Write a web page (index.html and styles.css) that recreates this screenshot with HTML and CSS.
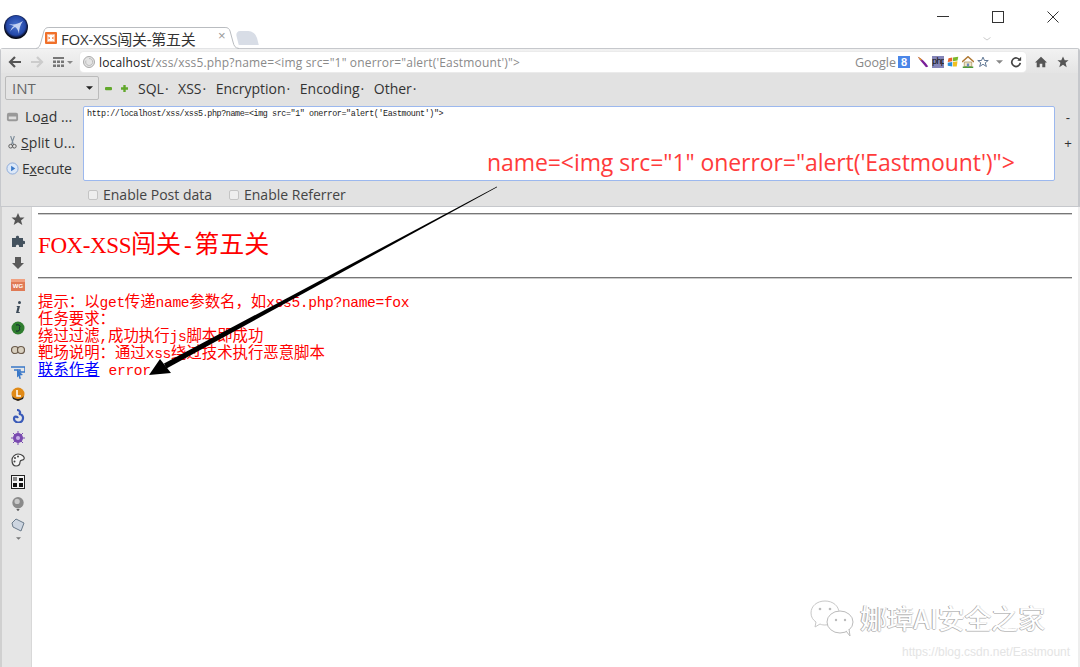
FILE: index.html
```html
<!DOCTYPE html>
<html lang="zh">
<head>
<meta charset="utf-8">
<title>FOX-XSS闯关-第五关</title>
<link rel="stylesheet" href="styles.css">
</head>
<body>
<div class="window">
  <header class="titlebar">
    <svg class="logo" viewBox="0 0 24 24"><defs><radialGradient id="lg" cx="50%" cy="45%" r="52%"><stop offset="0" stop-color="#4a74d0"/><stop offset=".75" stop-color="#2448a8"/><stop offset=".9" stop-color="#101c48"/><stop offset="1" stop-color="#050810"/></radialGradient></defs><circle cx="12" cy="12" r="12" fill="url(#lg)"/><path d="M5 9C10 10 14 9 19 6C16 10 15 14 15 19C14 15 13 13 11 12C9 13 7 15 6 17C7 14 8 12 10 11C8 10 6 10 5 9Z" fill="#c4d2f2"/></svg>
    <div class="tab">
      <svg class="tab-shape" viewBox="0 0 204 22" preserveAspectRatio="none"><path d="M0 21.5C3 21 4 19 5 15L8 4C9 1.500 10 .5 13 .5H190C193 .5 194 1.500 195 4L198 15C199 19 200 21 204 21.500" fill="#fff" stroke="#b9bcc0"/></svg>
      <svg class="favicon" viewBox="0 0 12 12"><rect width="12" height="12" rx="1" fill="#f0702a"/><path d="M2.500 2.500L5 5M9.500 2.500L7 5M2.500 9.500L5 7M9.500 9.500L7 7M3 3H5.500V9H3ZM6.500 3H9V9H6.500Z" stroke="#fff" stroke-width="1.100" fill="none"/></svg>
      <span class="tab-title">FOX-XSS闯关-第五关</span>
      <span class="tab-close">×</span>
    </div>
    <div class="newtab"></div>
    <svg class="chev" viewBox="0 0 8 4"><path d="M.5 .5L4 3L7.500 .5" stroke="#ccc" fill="none"/></svg>
    <div class="winctl">
      <svg class="ctl" viewBox="0 0 12 12"><path d="M0 5.500H12" stroke="#333"/></svg>
      <svg class="ctl" viewBox="0 0 12 12"><rect x=".5" y=".5" width="11" height="11" fill="none" stroke="#333"/></svg>
      <svg class="ctl" viewBox="0 0 12 12"><path d="M.5 .5L11.500 11.500M11.500 .5L.5 11.500" stroke="#333"/></svg>
    </div>
  </header>

  <section class="chrome">
    <div class="navrow">
      <svg class="nav" viewBox="0 0 14 14"><path d="M7 2L2 7L7 12M2 7H13" stroke="#555" stroke-width="2.200" fill="none"/></svg>
      <svg class="nav" viewBox="0 0 14 14"><path d="M7 2L12 7L7 12M12 7H1" stroke="#ccc" stroke-width="2.200" fill="none"/></svg>
      <svg class="nav grid" viewBox="0 0 20 12"><path d="M0 1H11V3H0ZM0 4.500H3V7H0ZM4 4.500H7V7H4ZM8 4.500H11V7H8ZM0 8.500H3V11H0ZM4 8.500H7V11H4ZM8 8.500H11V11H8Z" fill="#777"/><path d="M14 5H20L17 8Z" fill="#888"/></svg>
      <div class="urlbar">
        <svg class="globe" viewBox="0 0 12 12"><circle cx="6" cy="6" r="5.500" fill="#e4e4e4" stroke="#aaa"/><path d="M6 2.500A3.500 3.500 0 1 1 3 4.500" stroke="#bbb" fill="none"/></svg>
        <span class="url"><span class="host">localhost</span>/xss/xss5.php?name=&lt;img src="1" onerror="alert('Eastmount')"&gt;</span>
        <span class="google">Google</span>
        <span class="gbadge">8</span>
        <svg class="addon feather" viewBox="0 0 16 16"><path d="M1 1C6 3 11 8 15 14L12 15C8 10 4 6 1 1Z" fill="#7a1f9a"/><path d="M1 1C4 2 6 4 7 6L4 5Z" fill="#e8a020"/></svg>
        <span class="phpbadge">php</span>
        <svg class="addon" viewBox="0 0 16 16"><path d="M2 3L7 2V7L1 8Z" fill="#e8622a"/><path d="M8 2L15 1L14 6L8 7Z" fill="#7cb82a"/><path d="M1 9L7 8V14L1 13Z" fill="#2a8cd8"/><path d="M8 8L14 7L13 14L8 14Z" fill="#f0c020"/></svg>
        <svg class="addon" viewBox="0 0 16 16"><path d="M0 8L8 1L16 8" stroke="#b07a35" stroke-width="2" fill="none"/><path d="M3 8H13V14H3Z" fill="#f0e6c8" stroke="#a89060"/><path d="M1 15H15" stroke="#4c9a3a" stroke-width="2"/><path d="M6.500 10H9.500V14H6.500Z" fill="#6a8ac0"/></svg>
        <svg class="addon" viewBox="0 0 16 16"><path d="M8 1.500L10 6H15L11 9L12.500 14L8 11L3.500 14L5 9L1 6H6Z" fill="#fff" stroke="#5a7290" stroke-width="1.300"/></svg>
        <svg class="caret" viewBox="0 0 8 4"><path d="M0 0H8L4 4Z" fill="#888"/></svg>
        <svg class="reload" viewBox="0 0 14 14"><path d="M11.500 5A5 5 0 1 0 12 8" stroke="#444" stroke-width="2" fill="none"/><path d="M8.500 5.500H13V1Z" fill="#444"/></svg>
      </div>
      <svg class="tool" viewBox="0 0 14 14"><path d="M7 1L14 7.500H12V13H8.500V9H5.500V13H2V7.500H0Z" fill="#555"/></svg>
      <svg class="tool" viewBox="0 0 14 14"><path d="M7 .5L9 5H13.500L10 8L11.300 13L7 10.200L2.700 13L4 8L.5 5H5Z" fill="#555"/></svg>
    </div>

    <div class="hackbar-menu">
      <div class="select"><span>INT</span><svg class="sel-caret" viewBox="0 0 8 4"><path d="M0 0H8L4 4Z" fill="#222"/></svg></div>
      <svg class="mini minus" viewBox="0 0 7 7"><rect y="2" width="7" height="3.200" rx="1" fill="#62a82c"/></svg>
      <svg class="mini" viewBox="0 0 7 7"><path d="M2.300 0H4.700V2.300H7V4.700H4.700V7H2.300V4.700H0V2.300H2.300Z" fill="#62a82c"/></svg>
      <span class="menu-item first">SQL<i>·</i></span>
      <span class="menu-item">XSS<i>·</i></span>
      <span class="menu-item">Encryption<i>·</i></span>
      <span class="menu-item">Encoding<i>·</i></span>
      <span class="menu-item">Other<i>·</i></span>
    </div>

    <div class="hackbar-main">
      <div class="hb-actions">
        <div class="hb-btn"><svg class="hb-ico" viewBox="0 0 14 14"><rect x="1" y="3" width="12" height="9" rx="2" fill="#999"/><rect x="3" y="7" width="8" height="3" fill="#ddd"/></svg><span class="lbl-load">Lo<u>a</u>d ...</span></div>
        <div class="hb-btn"><svg class="hb-ico" viewBox="0 0 14 14"><path d="M5 0L8 9M9 0L6 9" stroke="#7a8a98" stroke-width="1.200"/><circle cx="5" cy="11" r="2" fill="none" stroke="#555"/><circle cx="9" cy="11" r="2" fill="none" stroke="#555"/></svg><span class="lbl-split"><u>S</u>plit U...</span></div>
        <div class="hb-btn"><svg class="hb-ico" viewBox="0 0 14 14"><circle cx="7" cy="7" r="6" fill="#dce8f8" stroke="#88a8d8"/><path d="M5.500 4L10 7L5.500 10Z" fill="#3a78c8"/></svg><span class="lbl-exec">E<u>x</u>ecute</span></div>
      </div>
      <div class="urlbox">http://localhost/xss/xss5.php?name=&lt;img src="1" onerror="alert('Eastmount')"&gt;</div>
      <div class="hb-side"><span>-</span><span>+</span></div>
    </div>

    <div class="hb-options">
      <label class="opt"><span class="check"></span>Enable Post data</label>
      <label class="opt"><span class="check"></span>Enable Referrer</label>
    </div>
  </section>

  <div class="body-row">
    <aside class="sidebar">
      <svg class="si" viewBox="0 0 14 14"><path d="M7 1L9 5.500H13.500L10 8.500L11.300 13L7 10.300L2.700 13L4 8.500L.5 5.500H5Z" fill="#555"/></svg>
      <svg class="si" viewBox="0 0 14 14"><path d="M1 4H5C4 1 9 1 8 4H12V7C15 6 15 11 12 10V13H8C9 10 4 10 5 13H1Z" fill="#44525e"/></svg>
      <svg class="si" viewBox="0 0 14 14"><path d="M4 1H10V7H13L7 13L1 7H4Z" fill="#5a5a5a"/></svg>
      <svg class="si" viewBox="0 0 14 14"><rect y="1" width="14" height="12" fill="#e07a55"/><rect y="1" width="14" height="3" fill="#f0a080"/><text x="7" y="10" class="si-text">WG</text></svg>
      <svg class="si" viewBox="0 0 14 14"><circle cx="8.500" cy="2.500" r="1.500" fill="#3c4a58"/><path d="M6 6H9L7.500 12H9L8.500 13H5L6.500 7H5.500Z" fill="#3c4a58"/></svg>
      <svg class="si" viewBox="0 0 14 14"><circle cx="7" cy="7" r="6.500" fill="#2f7d2f"/><path d="M5 4C9 3 10 6 8 7C10 8 8 11 5 10" stroke="#123" fill="none"/></svg>
      <svg class="si" viewBox="0 0 14 14"><circle cx="4" cy="7" r="3.500" fill="#d8d0c0" stroke="#6a5a4a" stroke-width="1.200"/><circle cx="10" cy="7" r="3.500" fill="#d8d0c0" stroke="#6a5a4a" stroke-width="1.200"/></svg>
      <svg class="si" viewBox="0 0 14 14"><path d="M0 2H14V7H9V5H3" fill="none" stroke="#3a78c8" stroke-width="1.500"/><path d="M6 4L12 10L9 10.500L10 13.500L8.500 14L7.500 11L6 12.500Z" fill="#3a78c8"/></svg>
      <svg class="si" viewBox="0 0 14 14"><circle cx="7" cy="7" r="6.500" fill="#e08a18"/><path d="M1 9C4 13 10 13 13 9L12 12L7 14L2 12Z" fill="#222"/><path d="M6 3V9H10" stroke="#fff" stroke-width="1.500" fill="none"/></svg>
      <svg class="si" viewBox="0 0 14 14"><path d="M6 1C9 1 10 4 8 5C12 5 13 9 11 12C8 15 3 13 3 10C3 7 6 7 7 9" fill="none" stroke="#3a5ab8" stroke-width="2.200"/></svg>
      <svg class="si" viewBox="0 0 14 14"><circle cx="7" cy="7" r="5" fill="#7a4ab0"/><path d="M7 0V14M0 7H14M2 2L12 12M12 2L2 12" stroke="#7a4ab0"/><circle cx="7" cy="7" r="2" fill="#c8b0e8"/></svg>
      <svg class="si" viewBox="0 0 14 14"><path d="M7 1C11 1 14 4 13 6C12 8 9 6 9 9C9 12 7 13 5 13C2 13 1 10 1 7C1 4 4 1 7 1Z" fill="#f4f4f4" stroke="#444" stroke-width="1.200"/><circle cx="4" cy="5" r="1" fill="#444"/><circle cx="7" cy="3.500" r="1" fill="#444"/><circle cx="3.500" cy="8.500" r="1" fill="#444"/></svg>
      <svg class="si" viewBox="0 0 14 14"><rect x=".5" y=".5" width="13" height="13" fill="#f4f4f4" stroke="#222"/><rect x="2" y="2" width="4" height="4" fill="#888"/><rect x="8" y="3" width="4" height="3" fill="#111"/><rect x="2" y="8" width="4" height="4" fill="#111"/><rect x="8" y="8" width="4" height="4" fill="#111"/></svg>
      <svg class="si" viewBox="0 0 14 16"><circle cx="7" cy="6.500" r="6.500" fill="#8a8a8a"/><circle cx="6" cy="5" r="3" fill="#c8c8c8"/><path d="M5 14H9L7 16Z" fill="#333"/></svg>
      <svg class="si" viewBox="0 0 14 14"><path d="M5 1L13 5L10 13L2 9L1 5Z" fill="#cdd5e0" stroke="#6a7a8a"/></svg>
      <svg class="si-more" viewBox="0 0 6 3"><path d="M0 0H6L3 3Z" fill="#777"/></svg>
    </aside>

    <main class="content">
      <hr class="rule">
      <h1 class="head"><span class="lat">FOX-XSS</span>闯关<span class="lat dash">-</span>第五关</h1>
      <hr class="rule second">
      <div class="lines">
        <p>提示：以<span class="lat">get</span>传递<span class="lat">name</span>参数名，如<span class="lat">xss5.php?name=fox</span></p>
        <p>任务要求：</p>
        <p>绕过过滤<span class="lat">,</span>成功执行<span class="lat">js</span>脚本即成功</p>
        <p>靶场说明：通过<span class="lat">xss</span>绕过技术执行恶意脚本</p>
        <p><a class="link" href="#">联系作者</a><span class="lat err">error</span></p>
      </div>
    </main>
  </div>
</div>

<div class="note">name=&lt;img src="1" onerror="alert('Eastmount')"&gt;</div>
<svg class="arrow" viewBox="0 0 1080 667"><path d="M497 186.500L164 363.500L166.500 368.500L497 187.300Z" fill="#000"/><path d="M149 375L160 359L171 373Z" fill="#000"/></svg>

<div class="mark">
  <svg class="mark-ico" viewBox="0 0 44 38"><path d="M15 1C7 1 1 6 1 13C1 17 3 20 6 22L5 27L10 24C12 25 14 25 15 25C24 25 29 19 29 13C29 6 23 1 15 1Z" fill="#fff" stroke="#c8c8c8"/><ellipse cx="30" cy="22" rx="13" ry="11" fill="#fff" stroke="#bbb"/><path d="M36 31L40 36L39 29" fill="#fff" stroke="#bbb"/><circle cx="10" cy="9" r="1.300" fill="#bbb"/><circle cx="20" cy="9" r="1.300" fill="#bbb"/><circle cx="26" cy="20" r="1.200" fill="#bbb"/><circle cx="35" cy="20" r="1.200" fill="#bbb"/></svg>
  <span class="mark-text">娜璋AI安全之家</span>
</div>
<div class="csdn">https://blog.csdn.net/Eastmount</div>
</body>
</html>
```

FILE: styles.css
```css
* { box-sizing: border-box; }
html, body { margin: 0; height: 667px; overflow: hidden; background: #fff; }
body { position: relative; font-family: "Liberation Sans", "Noto Sans CJK SC", sans-serif; color: #333; }
.window { height: 667px; width: 1080px; display: flex; flex-direction: column; }

.titlebar { height: 48px; flex: none; display: flex; align-items: flex-end; position: relative; }
.logo { width: 24px; height: 24px; margin: 0 8px 9px 4px; align-self: flex-end; }
.tab { width: 203px; height: 21px; position: relative; display: flex; align-items: center; padding: 1px 0 0 9px; }
.tab-shape { position: absolute; left: 0; top: 0; width: 100%; height: 22px; }
.favicon { width: 12px; height: 12px; position: relative; margin-right: 4px; }
.tab-title { position: relative; font: 15px "Open Sans", "Noto Sans CJK SC", sans-serif; color: #333; white-space: nowrap; letter-spacing: -.25px; }
.tab-close { position: absolute; left: 182px; top: 1px; font-size: 13px; color: #999; }
.newtab { width: 20px; height: 14px; margin: 0 0 3px -2px; background: #d8dde6; border-radius: 5px 7px 0 0; transform: skewX(14deg); }
.chev { width: 8px; height: 4px; margin: 0 0 7px 726px; flex: none; }
.winctl { position: absolute; right: 0; top: 0; display: flex; gap: 43px; padding: 11px 21px 0 0; }
.ctl { width: 12px; height: 12px; }

.chrome { height: 159px; flex: none; background: #e2e2e2; border: 1px solid #c6c8cc; border-radius: 3px 3px 0 0; border-right-width: 2px; display: flex; flex-direction: column; }
.navrow { height: 25px; display: flex; align-items: center; padding: 2px 0 0 7px; background: linear-gradient(#f2f2f2, #e4e4e4); }
.nav { width: 14px; height: 14px; margin-right: 8px; }
.nav.grid { width: 20px; height: 12px; margin: 0 7px 0 1px; }
.urlbar { width: 946px; height: 20px; flex: none; background: #fff; border-radius: 4px; box-shadow: 0 0 0 1px #ebebeb; display: flex; align-items: center; padding: 0 4px 0 3px; }
.globe { width: 12px; height: 12px; margin-right: 4px; flex: none; }
.url { font: 12px "Open Sans", sans-serif; color: #8a8a8a; white-space: nowrap; letter-spacing: .17px; }
.host { color: #222; }
.google { margin-left: auto; font: 12.500px "Open Sans", sans-serif; color: #888; }
.gbadge { width: 12px; height: 12px; margin: 0 7px 0 2px; background: #4a86e8; color: #fff; font: bold 11px/12px "Liberation Sans", sans-serif; text-align: center; }
.addon { width: 12px; height: 12px; margin-right: 3px; flex: none; }
.phpbadge { width: 12px; height: 12px; margin-right: 3px; background: #8485b8; color: #111; font: 9px/11px "Liberation Sans", sans-serif; letter-spacing: -.6px; overflow: hidden; text-align: center; }
.caret { width: 7px; height: 4px; margin: 0 7px 0 4px; }
.reload { width: 12px; height: 12px; }
.tool { width: 12px; height: 12px; margin-left: 9px; }
.tool + .tool { margin-left: 10px; }

.hackbar-menu { height: 30px; display: flex; align-items: center; padding: 2px 0 0 4px; font: 14px "Open Sans", sans-serif; color: #333; }
.select { width: 94px; height: 24px; border: 1px solid #bbb; border-radius: 2px; background: #e4e4e4; display: flex; align-items: center; justify-content: space-between; padding: 0 5px 0 6px; color: #666; font-size: 15px; }
.sel-caret { width: 7px; height: 4px; }
.mini { width: 7px; height: 7px; margin-left: 9px; }
.minus { margin-left: 6px; }
.menu-item { margin-left: 9.500px; white-space: nowrap; }
.menu-item i { font-style: normal; margin-left: 1px; }
.menu-item.first { margin-left: 10px; }

.hackbar-main { display: flex; height: 75px; margin-top: 4px; }
.hb-actions { width: 82px; flex: none; padding: 0 0 0 5px; display: flex; flex-direction: column; margin-top: -2px; }
.hb-btn { height: 26px; flex: none; display: flex; align-items: center; gap: 4px; font: 14px "Open Sans", sans-serif; white-space: nowrap; letter-spacing: -.1px; }
.lbl-load { margin-left: 2px; letter-spacing: .05px; }
.lbl-split { margin-left: -2px; letter-spacing: .1px; }
.lbl-exec { margin-left: -1px; letter-spacing: -.2px; }
.hb-ico { width: 13px; height: 13px; flex: none; }
.urlbox { width: 972px; flex: none; height: 75px; background: #fff; border: 1px solid #9cb8ee; border-radius: 2px; padding: 1px 3px; font: 8.400px/12px "Liberation Mono", monospace; color: #222; letter-spacing: -.4px; }
.hb-side { flex: 1; display: flex; flex-direction: column; align-items: center; font: 13px/26px "Liberation Sans", sans-serif; padding-left: 3px; margin-top: -1px; }

.hb-options { height: 26px; display: flex; align-items: center; padding: 3px 0 0 87px; gap: 17px; font: 14px "Open Sans", sans-serif; color: #444; }
.opt { display: flex; align-items: center; gap: 5px; }
.check { width: 10px; height: 10px; border: 1px solid #c4c4c4; border-radius: 2px; background: #eee; }

.body-row { flex: 1; display: flex; min-height: 0; border-right: 2px solid #eee; }
.sidebar { width: 32px; flex: none; background: #e6e6e6; border-left: 2px solid #d0d0d0; border-right: 1px solid #d8d8d8; display: flex; flex-direction: column; align-items: center; gap: 7.900px; padding: 5px 0 0 3px; }
.si { width: 14px; height: 14px; flex: none; }
.si-more { width: 5px; height: 3px; margin-top: -3px; flex: none; }
.si-text { font: bold 6px "Liberation Sans", sans-serif; fill: #fff; text-anchor: middle; }

.content { flex: 1; padding: 6px 6px 0 6px; color: #f00; font-family: "Liberation Mono", "Noto Sans CJK SC", monospace; }
.rule { margin: 0; height: 2px; border: 0; border-top: 1px solid #777; border-bottom: 1px solid #ccc; }
.head { margin: 16px 0 16px; font-size: 25px; line-height: 29px; font-weight: 400; white-space: nowrap; }
.head .lat { font-family: "Liberation Serif", serif; font-size: 23px; letter-spacing: -.4px; }
.head .dash { margin: 0 3px; }
.rule.second { margin-bottom: 16px; }
.lines { font-size: 15.400px; line-height: 17px; }
.lines p { margin: 0; height: 17px; white-space: nowrap; }
.lines .lat { font-size: 14.600px; letter-spacing: -.35px; }
.link { color: #00f; text-decoration: underline; }
.lines .err { margin-left: 9px; }

.note { position: absolute; left: 487px; top: 146px; font: 23px "Open Sans", sans-serif; color: #ff3b3b; white-space: nowrap; letter-spacing: -.08px; }
.arrow { position: absolute; left: 0; top: 0; width: 1080px; height: 667px; pointer-events: none; }
.mark { position: absolute; left: 810px; top: 600px; display: flex; align-items: center; gap: 6px; }
.mark-ico { width: 44px; height: 38px; }
.mark-text { font: 26.800px "Noto Sans CJK SC", sans-serif; color: #fff; margin-top: -4px; text-shadow: -1px 0 #aaa, 0 1px #c4c4c4, 1px 0 #ddd; }
.csdn { position: absolute; left: 902px; top: 645px; font: 12px "Liberation Sans", sans-serif; color: #e4e4e4; white-space: nowrap; }
```
